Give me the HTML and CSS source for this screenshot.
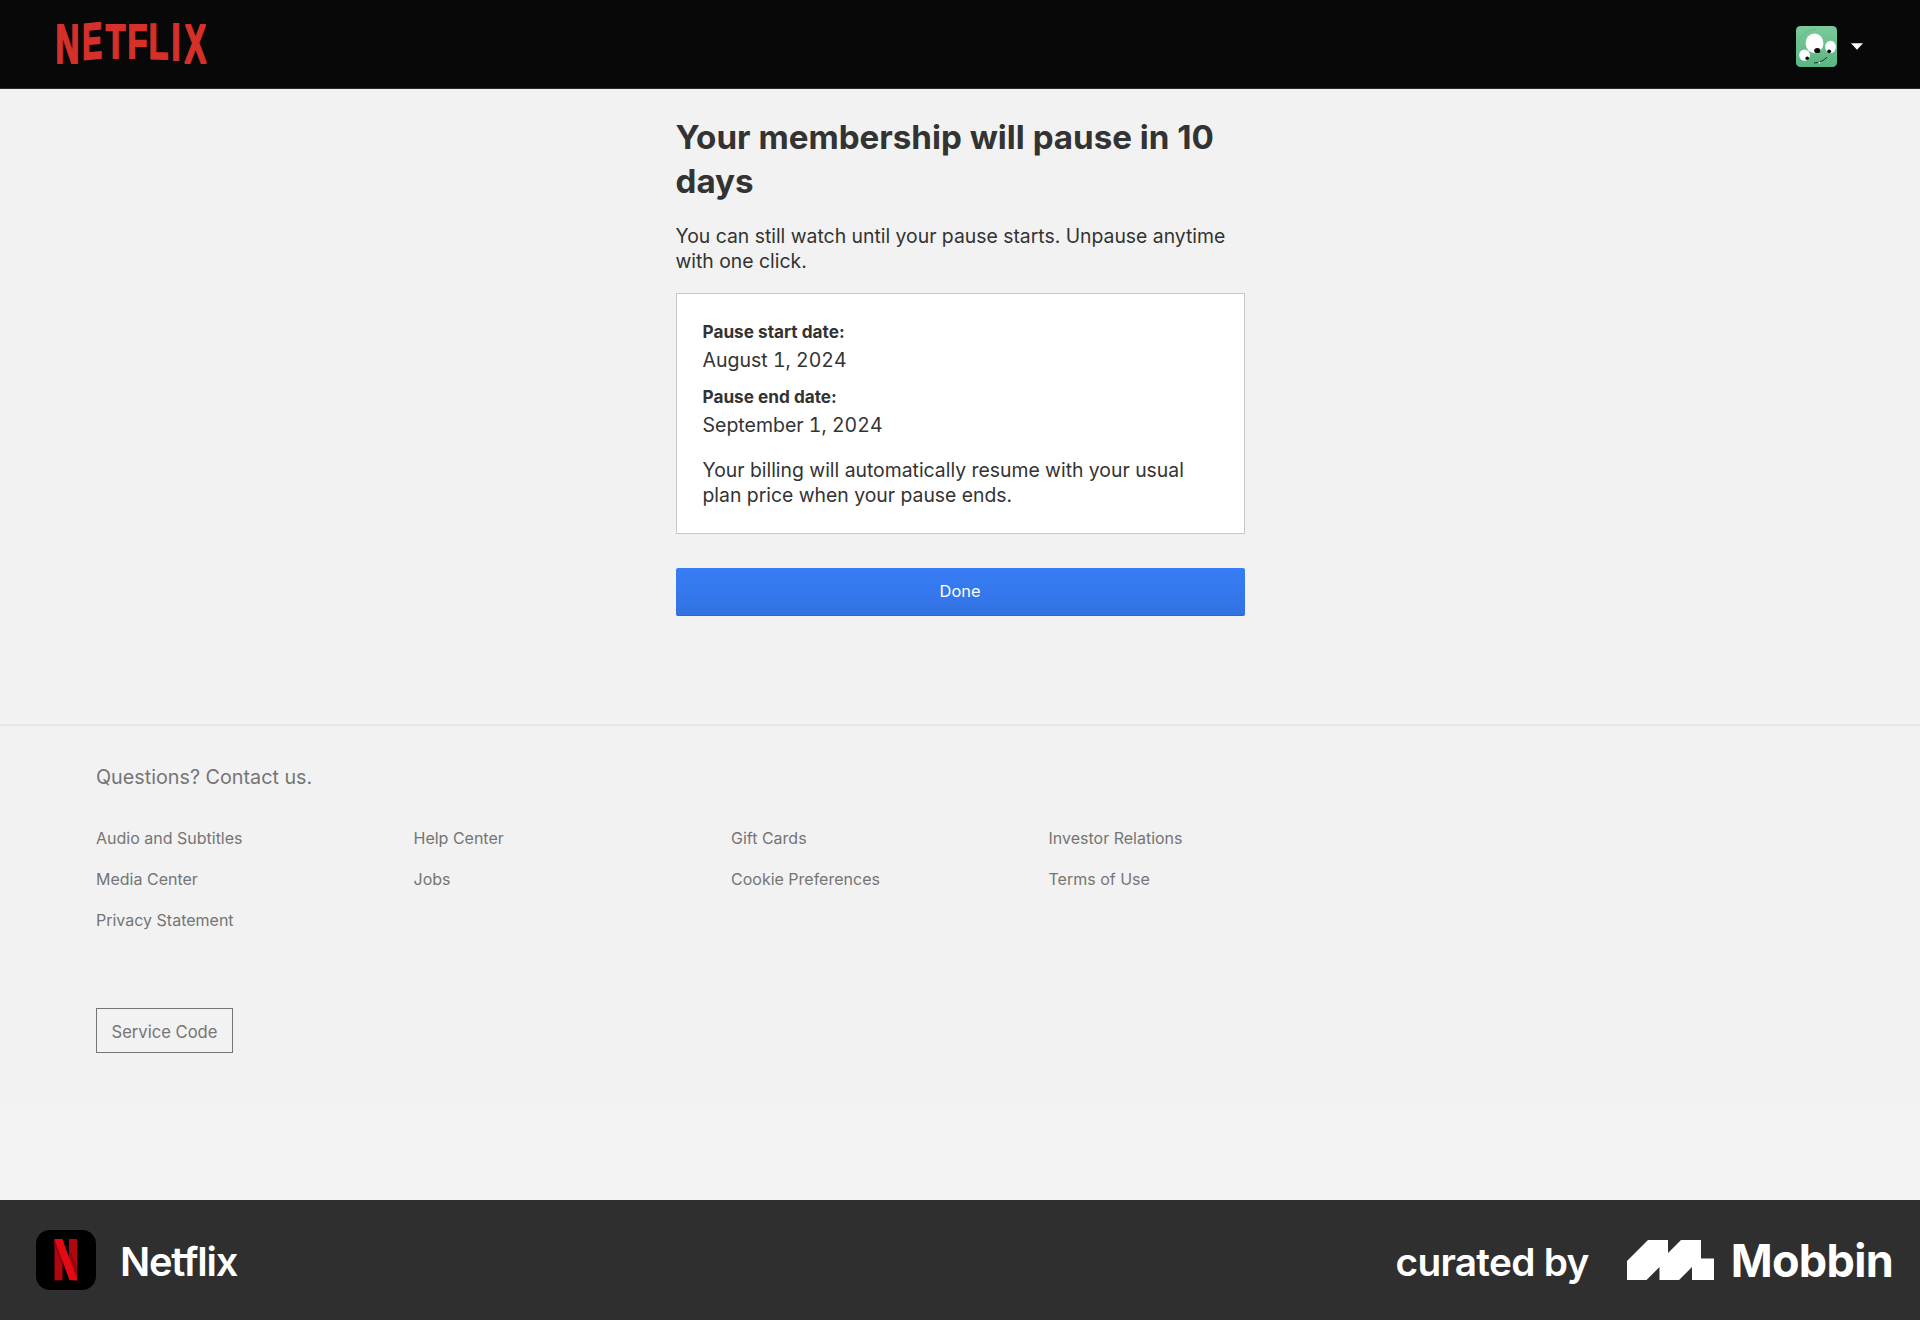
FILE: index.html
```html
<!DOCTYPE html>
<html lang="en">
<head>
<meta charset="utf-8">
<title>Netflix</title>
<link rel="stylesheet" href="styles.css">
</head>
<body>
<div class="page">
  <header class="header">
    <svg class="wordmark" width="151" height="42" viewBox="57 23 151 42" role="img" aria-label="Netflix">
      <text transform="translate(55.4 62.6) scale(.33 .555)">N</text>
      <text transform="translate(82.3 59.5) scale(.298 .508) skewY(-3)">E</text>
      <text transform="translate(105.7 58) scale(.322 .49)">T</text>
      <text transform="translate(127.5 57.7) scale(.326 .486)">F</text>
      <text transform="translate(148.8 58.6) scale(.32 .5) skewY(1)">L</text>
      <text transform="translate(171.5 59.6) scale(.328 .511)">I</text>
      <text transform="translate(184.600 62.6) scale(.327 .555)">X</text>
    </svg>
    <div class="account">
      <svg class="avatar" width="41" height="41" viewBox="0 0 41 41">
        <defs><linearGradient id="av" x1="0" y1="0" x2="0" y2="1"><stop offset="0" stop-color="#7acb9b"/><stop offset="1" stop-color="#59b682"/></linearGradient></defs>
        <rect width="41" height="41" rx="4.5" fill="url(#av)"/>
        <path d="M1 21Q4 4 21 3" fill="none" stroke="#62b487" stroke-width=".8"/>
        <ellipse cx="18.5" cy="17.2" rx="8.9" ry="9.8" fill="#fff"/>
        <ellipse cx="34.5" cy="21" rx="5.3" ry="6.2" fill="#fff"/>
        <ellipse cx="8.5" cy="29.2" rx="5.4" ry="5.6" fill="#fff"/>
        <ellipse cx="21.3" cy="24.5" rx="3.1" ry="2.6" fill="#0a0a0a"/>
        <circle cx="33.2" cy="25.3" r="1.9" fill="#0a0a0a"/>
        <circle cx="11.2" cy="32.2" r="1.8" fill="#0a0a0a"/>
        <path d="M18 37Q26 36.500 31 31.200" fill="none" stroke="#173524" stroke-width="1"/>
        <path d="M22 36.300l2.200-.8 0 2.300z" fill="#fff"/>
      </svg>
      <svg class="caret" width="12" height="7" viewBox="0 0 12 7"><path d="M0 .3H12L6 6.700Z" fill="#fff"/></svg>
    </div>
  </header>

  <main class="main">
    <h1 class="title">Your membership will pause in 10 days</h1>
    <p class="text">You can still watch until your pause starts. Unpause anytime with one click.</p>
    <section class="card">
      <h2 class="label">Pause start date:</h2>
      <p class="date">August 1, 2024</p>
      <h2 class="label">Pause end date:</h2>
      <p class="date">September 1, 2024</p>
      <p class="text billing">Your billing will automatically resume with your usual plan price when your pause ends.</p>
    </section>
    <button class="done">Done</button>
  </main>

  <footer class="footer">
    <p class="contact">Questions? Contact us.</p>
    <ul class="links">
      <li>Audio and Subtitles</li><li>Help Center</li><li>Gift Cards</li><li>Investor Relations</li>
      <li>Media Center</li><li>Jobs</li><li>Cookie Preferences</li><li>Terms of Use</li>
      <li>Privacy Statement</li>
    </ul>
    <button class="service">Service Code</button>
  </footer>
</div>

<div class="credit">
  <div class="app">
    <svg width="60" height="60" viewBox="0 0 60 60">
      <rect width="60" height="60" rx="14" fill="#000"/>
      <path d="M18.500 9h8v41.200q-4-.2-8 .3zM33 9h8v41.500l-8-1z" fill="#b1060f"/>
      <path d="M18.500 9l8 20v7L18.500 15z" fill="#8c0710"/>
      <path d="M33 24l8 20v-6L33 18z" fill="#8c0710"/>
      <path d="M18.500 9h8l14.700 41.500q-4-.6-7.800-.5z" fill="#e50914"/>
    </svg>
    <span class="app-name">Netflix</span>
  </div>
  <div class="curator">
    <span class="curated">curated by</span>
    <svg class="mark" width="87" height="40" viewBox="0 0 87 40"><path d="M0 21L21 0H41V13L54 0H74V18.500H87V40H65V27L52 40H32.500V27L19.500 40H0Z" fill="#fff"/></svg>
    <span class="mobbin">Mobbin</span>
  </div>
</div>
</body>
</html>
```
FILE: styles.css
```css
* { box-sizing: border-box; margin: 0; padding: 0; }

body {
  width: 1920px;
  height: 1320px;
  display: flex;
  flex-direction: column;
  font-family: Inter, "Liberation Sans", sans-serif;
  background: #f3f3f3;
  color: #333;
  overflow: hidden;
}

.page { height: 1200px; background: linear-gradient(#f2f2f2 1107px, #f3f3f3 1107px); }

.header {
  height: 89px;
  padding: 23px 57.5px 0 57px;
  display: flex;
  justify-content: space-between;
  background: #080808;
  border-bottom: 1px solid #2a2a2a;
}
.wordmark { display: block; overflow: visible; fill: #d5302a; stroke: #d5302a; stroke-width: 4px; stroke-linejoin: miter; stroke-miterlimit: 2; font: bold 100px "Liberation Sans", Arial, sans-serif; }
.account { display: flex; align-items: flex-start; gap: 14px; padding: 3px 0 0; }
.caret { margin-top: 17px; }

.main { width: 569px; height: 635px; margin: 0 auto; padding-top: 26px; }
.title { font-size: 33.15px; line-height: 44px; font-weight: 700; }
.text { font-size: 19.38px; line-height: 25.2px; }
.title + .text { margin-top: 21px; }

.card {
  height: 241px;
  margin-top: 19px;
  padding: 25.5px 25px 0 26px;
  background: #fff;
  border: 1px solid #c8c8c8;
}
.label { font-size: 17.2px; line-height: 24px; font-weight: 700; }
.date { margin: 4px 0 12.5px; font-size: 19.5px; line-height: 25px; font-variant-numeric: tabular-nums; }
.billing { margin-top: 19.5px; }

.done {
  display: block;
  width: 100%;
  height: 48px;
  margin-top: 34px;
  border: 0;
  border-bottom: 1px solid #3567b8;
  border-radius: 2px;
  background: linear-gradient(#387df7, #3273e2);
  color: #fff;
  font: 400 16.4px/47px Inter, sans-serif;
}

.footer { padding: 38px 96px 0; border-top: 2px solid #e6e6e6; color: #757575; }
.contact { font-size: 19.75px; line-height: 26px; }
.links {
  display: grid;
  grid-template-columns: repeat(4, 317.5px);
  grid-auto-rows: 41.2px;
  margin-top: 38px;
  list-style: none;
  font-size: 16px;
  line-height: 20px;
}
.service {
  width: 137px;
  height: 45px;
  margin-top: 56.1px;
  padding-top: 3px;
  background: none;
  border: 1px solid #757575;
  color: #757575;
  font: 400 16.6px Inter, sans-serif;
}

.credit {
  height: 120px;
  padding: 0 27px 0 36px;
  display: flex;
  align-items: center;
  justify-content: space-between;
  background: #2f2f2f;
  color: #fff;
}
.app, .curator { display: flex; align-items: center; }
.app-name { margin: 3px 0 0 24px; font-size: 39.8px; font-weight: 570; letter-spacing: -1.2px; }
.curated { margin-top: 3px; font-size: 38.8px; font-weight: 570; letter-spacing: -.7px; }
.mark { margin: 0 17px 0 38px; }
.mobbin { font-size: 45px; font-weight: 650; letter-spacing: -.7px; }
```
